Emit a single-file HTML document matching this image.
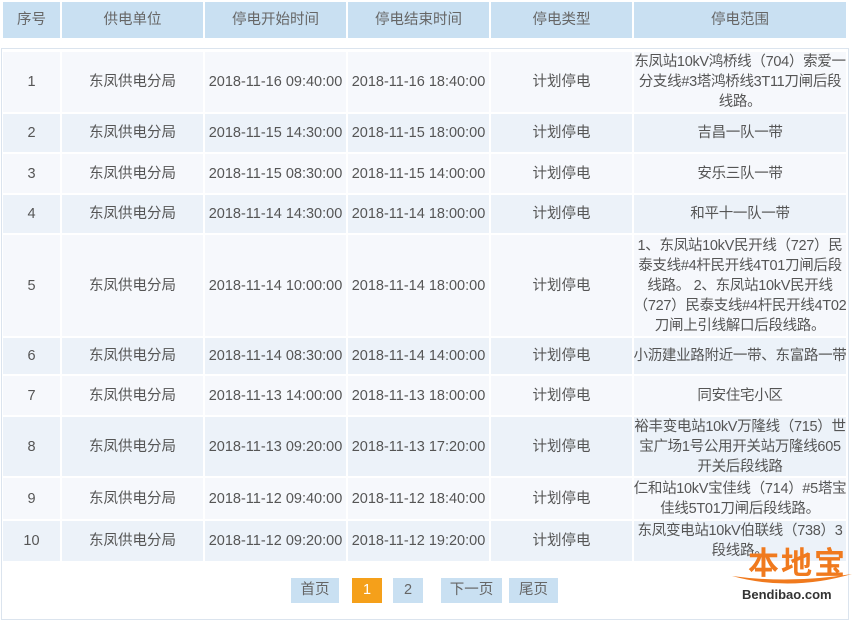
<!DOCTYPE html>
<html><head><meta charset="utf-8"><style>
body{margin:0;width:854px;height:607px;background:#fff;position:relative;overflow:hidden;font-family:"Liberation Sans","Noto Sans CJK SC",sans-serif;font-size:14.5px;color:#555}
.c{position:absolute;display:flex;align-items:center;justify-content:center;text-align:center;line-height:20px;white-space:nowrap}
.h{background:#c9e0f2;color:#666;top:2px;height:36px}
.o{background:#f6f8fc}
.e{background:#ecf2f9}
.r{letter-spacing:-0.3px}
.b{position:absolute;background:#c9e0f2;color:#666;top:578px;height:25px;line-height:25px;text-align:center}
</style></head><body>
<div style="position:absolute;left:1px;top:48px;width:846px;height:570px;border:1px solid #dbe4ee"></div>
<div id="t"></div>
<div class="b" style="left:291px;width:48px">首页</div>
<div class="b" style="left:352px;width:30px;background:#f5a01a;color:#fff">1</div>
<div class="b" style="left:393px;width:30px">2</div>
<div class="b" style="left:441px;width:61px">下一页</div>
<div class="b" style="left:509px;width:49px">尾页</div>
<div style="position:absolute;left:748px;top:546px;font-size:31px;font-weight:bold;color:#f07a1e;letter-spacing:2px;line-height:36px">本地宝</div>
<svg style="position:absolute;left:730px;top:570px" width="124" height="20"><path d="M2 6 Q60 22 122 4 Q60 14 2 6Z" fill="#f07a1e"/></svg>
<div style="position:absolute;left:742px;top:587px;font-size:13px;font-weight:bold;color:#333">Bendibao.com</div>
<script>
var cols=[[3,57],[62,141],[205,141],[348,141],[491,141],[634,212]];
var hd=["序号","供电单位","停电开始时间","停电结束时间","停电类型","停电范围"];
var s="";
hd.forEach(function(t,i){s+='<div class="c h" style="left:'+cols[i][0]+'px;width:'+cols[i][1]+'px">'+t+'</div>';});
var rows=[[52,60,"2018-11-16 09:40:00","2018-11-16 18:40:00","东凤站10kV鸿桥线（704）索爱一<br>分支线#3塔鸿桥线3T11刀闸后段<br>线路。"],
[114,38,"2018-11-15 14:30:00","2018-11-15 18:00:00","吉昌一队一带"],
[154,39,"2018-11-15 08:30:00","2018-11-15 14:00:00","安乐三队一带"],
[195,38,"2018-11-14 14:30:00","2018-11-14 18:00:00","和平十一队一带"],
[235,101,"2018-11-14 10:00:00","2018-11-14 18:00:00","1、东凤站10kV民开线（727）民<br>泰支线#4杆民开线4T01刀闸后段<br>线路。 2、东凤站10kV民开线<br>（727）民泰支线#4杆民开线4T02<br>刀闸上引线解口后段线路。"],
[338,36,"2018-11-14 08:30:00","2018-11-14 14:00:00","小沥建业路附近一带、东富路一带"],
[376,39,"2018-11-13 14:00:00","2018-11-13 18:00:00","同安住宅小区"],
[417,59,"2018-11-13 09:20:00","2018-11-13 17:20:00","裕丰变电站10kV万隆线（715）世<br>宝广场1号公用开关站万隆线605<br>开关后段线路"],
[478,41,"2018-11-12 09:40:00","2018-11-12 18:40:00","仁和站10kV宝佳线（714）#5塔宝<br>佳线5T01刀闸后段线路。"],
[521,40,"2018-11-12 09:20:00","2018-11-12 19:20:00","东凤变电站10kV伯联线（738）3<br>段线路。"]];
rows.forEach(function(r,k){var cl=k%2?'e':'o';var v=[k+1,"东凤供电分局",r[2],r[3],"计划停电",r[4]];
v.forEach(function(t,i){s+='<div class="c '+cl+(i==5?' r':'')+'" style="left:'+cols[i][0]+'px;width:'+cols[i][1]+'px;top:'+r[0]+'px;height:'+r[1]+'px">'+t+'</div>';});});
document.getElementById('t').innerHTML=s;
</script>
</body></html>
